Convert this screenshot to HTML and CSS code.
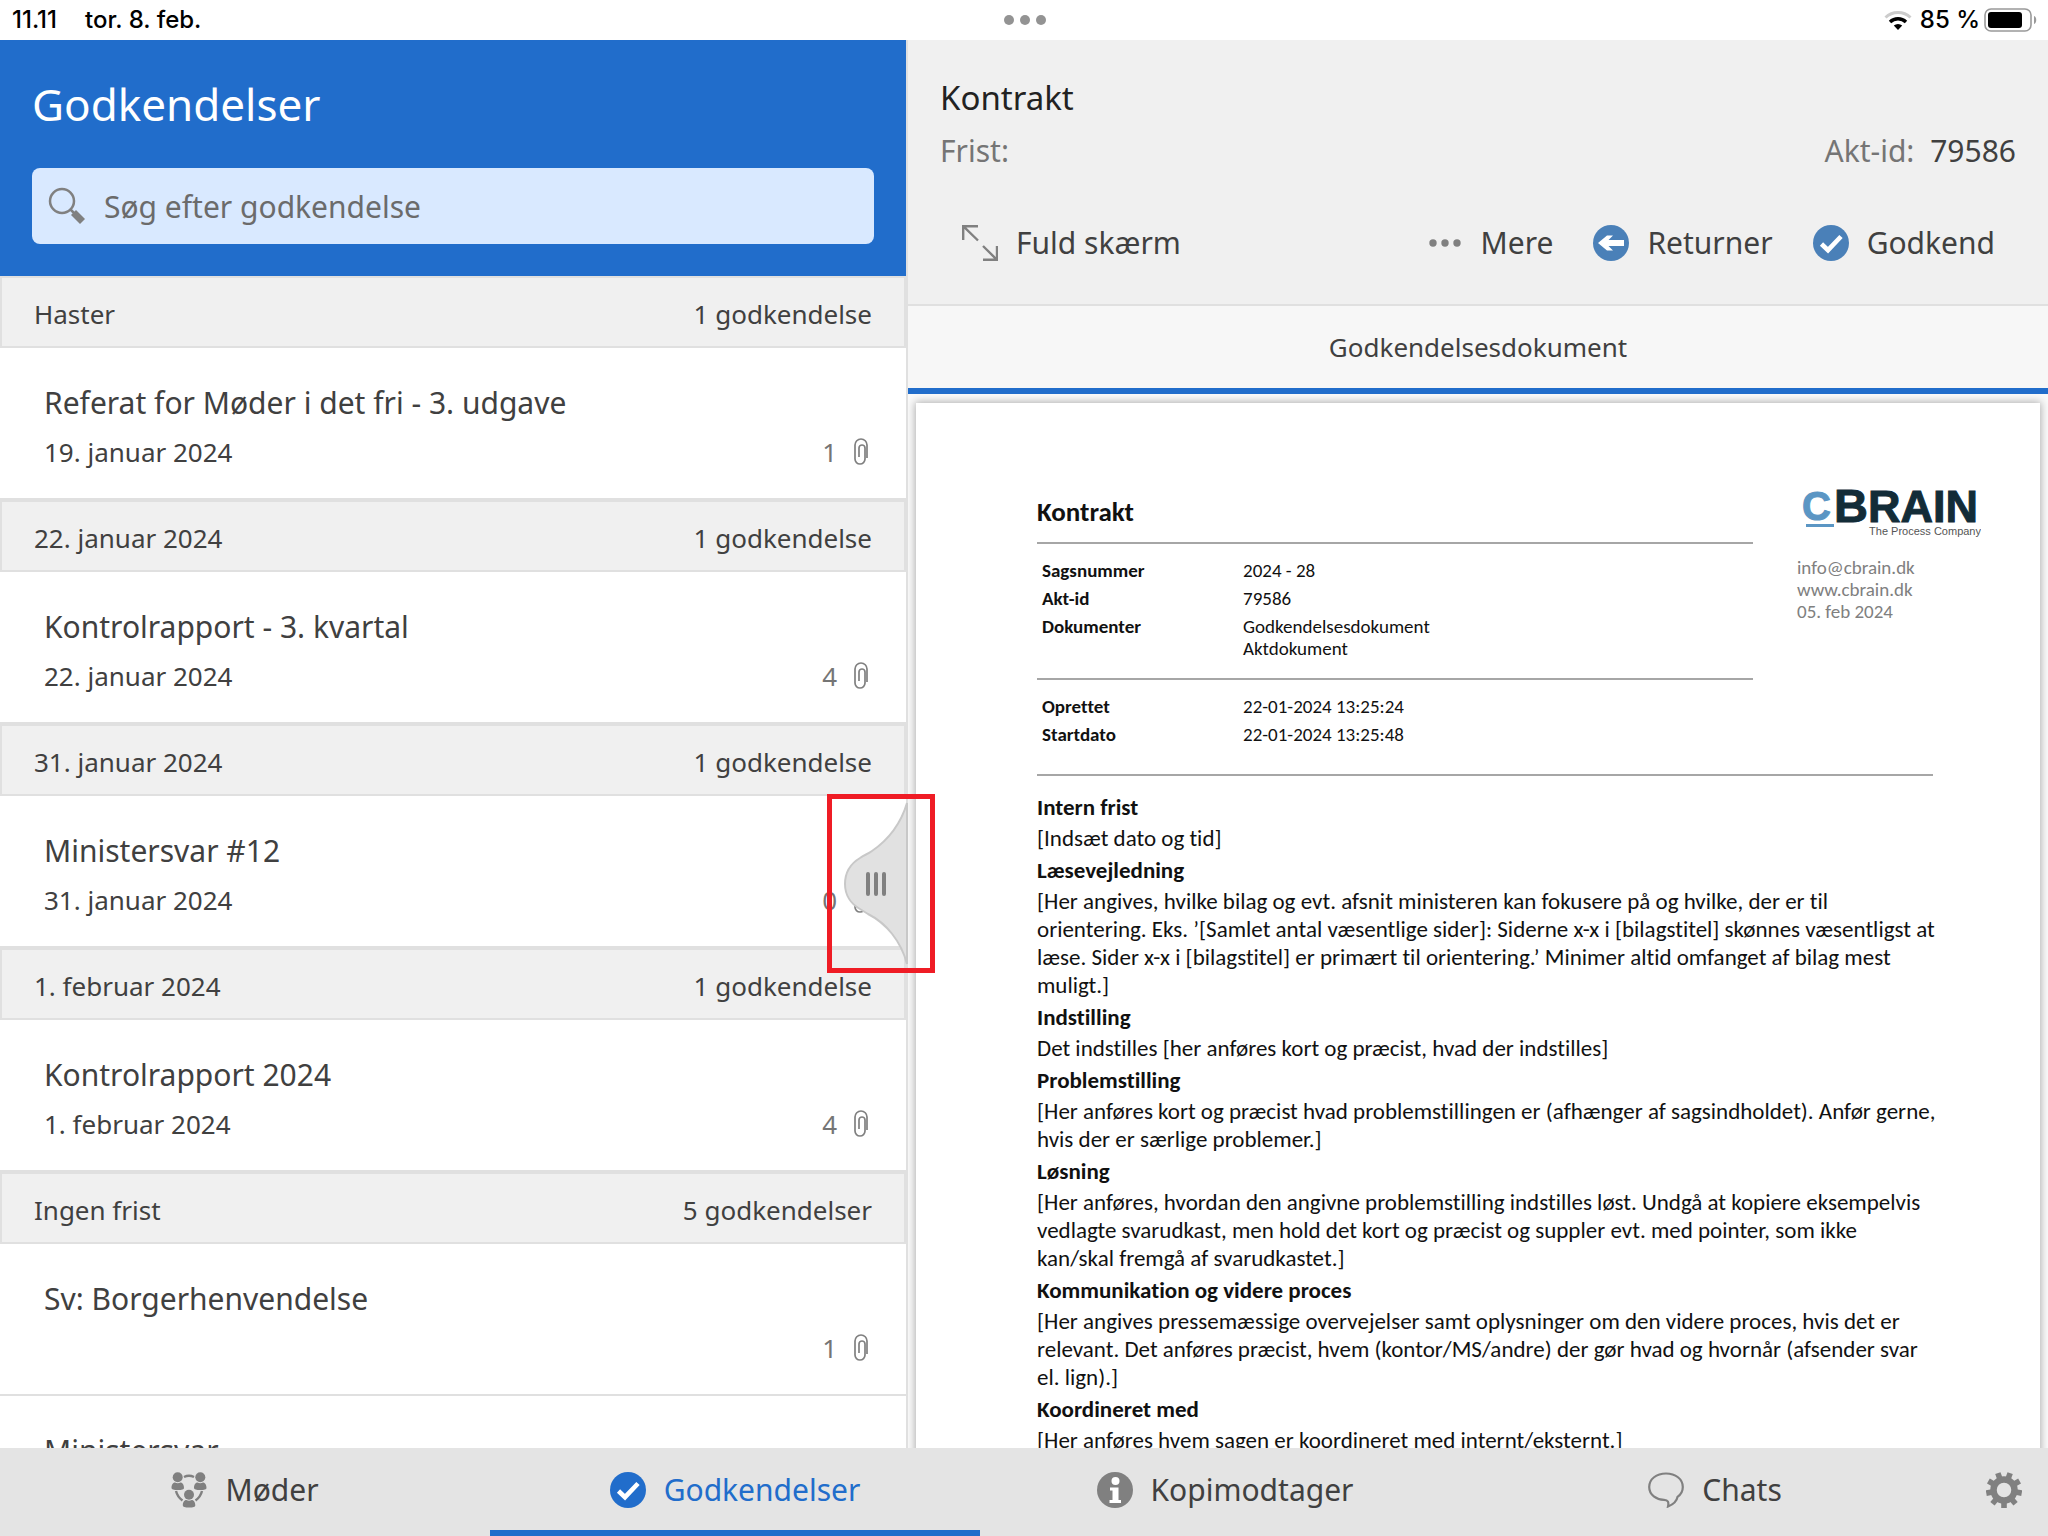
FILE: index.html
```
<!DOCTYPE html>
<html lang="da">
<head>
<meta charset="utf-8">
<meta name="viewport" content="width=device-width, initial-scale=1">
<title>Godkendelser</title>
<link rel="stylesheet" href="styles.css">
</head>
<body class="app">

<svg class="sprite" aria-hidden="true">
  <symbol id="clip" viewBox="0 0 14 28">
    <path d="M13 20V7a6 6 0 0 0-12 0v14a5 5 0 0 0 10 0V10a3 3 0 0 0-6 0v9" fill="none" stroke="#808080" stroke-width="1.7"/>
  </symbol>
  <symbol id="check" viewBox="0 0 36 36">
    <circle cx="18" cy="18" r="18" fill="currentColor"/>
    <path d="M8.500 19l6.500 6.200L28 11.500" fill="none" stroke="#fff" stroke-width="4.600"/>
  </symbol>
</svg>

<header class="status">
  <div class="status-side"><span>11.11</span><span>tor. 8. feb.</span></div>
  <div class="status-dots"><i></i><i></i><i></i></div>
  <div class="status-side status-right">
    <svg class="wifi" viewBox="0 0 28 20" aria-hidden="true">
      <path d="M1.500 7.500a18 18 0 0 1 25 0" fill="none" stroke="#ccc" stroke-width="3"/>
      <path d="M6 12a11.500 11.500 0 0 1 16 0" fill="none" stroke="#000" stroke-width="3.400"/>
      <path d="M14 20l-4.200-4.400a6 6 0 0 1 8.400 0z"/>
    </svg>
    <span class="percent">85 %</span>
    <svg class="battery" viewBox="0 0 54 24" aria-hidden="true">
      <rect x="1" y="1" width="46" height="22" rx="6" fill="none" stroke="#999" stroke-width="1.600"/>
      <rect x="4" y="4" width="34" height="16" rx="3"/>
      <path d="M50 8c3 1 3 7 0 8z" fill="#999"/>
    </svg>
  </div>
</header>

<main class="workspace">
  <section class="inbox">
    <header class="inbox-head">
      <h1 class="inbox-title">Godkendelser</h1>
      <label class="search">
        <svg class="search-icon" viewBox="0 0 38 38" aria-hidden="true">
          <circle cx="14" cy="14" r="12" fill="none" stroke="#808080" stroke-width="2.500"/>
          <path d="M22 22l5 5" stroke="#808080" stroke-width="2.500"/>
          <path d="M25.500 25.500l9 9" stroke="#808080" stroke-width="7"/>
        </svg>
        <input class="search-input" type="search" placeholder="Søg efter godkendelse" aria-label="Søg efter godkendelse">
      </label>
    </header>
    <div class="list">
      <h2 class="group"><span>Haster</span><span>1 godkendelse</span></h2>
      <article class="item">
        <h3 class="item-title">Referat for Møder i det fri - 3. udgave</h3>
        <div class="item-meta"><span>19. januar 2024</span><span class="files">1<svg class="clip"><use href="#clip"/></svg></span></div>
      </article>
      <h2 class="group"><span>22. januar 2024</span><span>1 godkendelse</span></h2>
      <article class="item">
        <h3 class="item-title">Kontrolrapport - 3. kvartal</h3>
        <div class="item-meta"><span>22. januar 2024</span><span class="files">4<svg class="clip"><use href="#clip"/></svg></span></div>
      </article>
      <h2 class="group"><span>31. januar 2024</span><span>1 godkendelse</span></h2>
      <article class="item">
        <h3 class="item-title">Ministersvar #12</h3>
        <div class="item-meta"><span>31. januar 2024</span><span class="files">0<svg class="clip"><use href="#clip"/></svg></span></div>
      </article>
      <h2 class="group"><span>1. februar 2024</span><span>1 godkendelse</span></h2>
      <article class="item">
        <h3 class="item-title">Kontrolrapport 2024</h3>
        <div class="item-meta"><span>1. februar 2024</span><span class="files">4<svg class="clip"><use href="#clip"/></svg></span></div>
      </article>
      <h2 class="group"><span>Ingen frist</span><span>5 godkendelser</span></h2>
      <article class="item">
        <h3 class="item-title">Sv: Borgerhenvendelse</h3>
        <div class="item-meta"><span></span><span class="files">1<svg class="clip"><use href="#clip"/></svg></span></div>
      </article>
      <article class="item">
        <h3 class="item-title">Ministersvar</h3>
      </article>
    </div>
    <button class="handle" type="button" aria-label="Træk for at ændre bredden">
      <svg class="handle-shape" viewBox="0 0 64 164">
        <path d="M63 1C57 21 44 38 28 49 24 52 20 53 16 56 6 62 1 71 1 82 1 93 7 102 16 107L24 112C42 121 57 139 63 162Z" fill="#e1e1e1" stroke="#c8c8c8" stroke-width="2"/>
        <path d="M24 72v20M32 72v20M40 72v20" stroke="#808080" stroke-width="4" stroke-linecap="round"/>
      </svg>
    </button>
    <div class="callout"></div>
  </section>

  <section class="detail">
    <header class="detail-head">
      <h2 class="detail-title">Kontrakt</h2>
      <div class="detail-meta"><span>Frist:</span><span class="akt">Akt-id: <b>79586</b></span></div>
      <div class="actions">
        <button class="action action-full" type="button">
          <svg class="icon" viewBox="0 0 36 36" fill="none" stroke="#808080" stroke-width="2.400" aria-hidden="true">
            <path d="M1.200 15V1.200H16M1.200 1.200L16 15.500M35 21v13.800H21M35 34.800L21 21"/>
          </svg>Fuld skærm
        </button>
        <button class="action" type="button">
          <svg class="icon" viewBox="0 0 36 36" fill="#808080" aria-hidden="true"><circle cx="6" cy="18" r="3.700"/><circle cx="18" cy="18" r="3.700"/><circle cx="30" cy="18" r="3.700"/></svg>Mere
        </button>
        <button class="action" type="button">
          <svg class="icon" viewBox="0 0 36 36" aria-hidden="true"><circle cx="18" cy="18" r="18" fill="#4a80b8"/><path d="M5 18l9-7.500h6L15.500 15H31v6H15.500l4.500 4.500h-6z" fill="#fff"/></svg>Returner
        </button>
        <button class="action" type="button">
          <svg class="icon icon-approve"><use href="#check"/></svg>Godkend
        </button>
      </div>
    </header>
    <button class="doc-tab" type="button">Godkendelsesdokument</button>
    <div class="viewer">
      <article class="page">
        <div class="page-top">
          <div>
            <h1 class="page-title">Kontrakt</h1>
            <hr class="rule">
            <table class="facts">
              <tr><th scope="row">Sagsnummer</th><td>2024 - 28</td></tr>
              <tr><th scope="row">Akt-id</th><td>79586</td></tr>
              <tr><th scope="row">Dokumenter</th><td>Godkendelsesdokument<br>Aktdokument</td></tr>
            </table>
            <hr class="rule">
            <table class="facts">
              <tr><th scope="row">Oprettet</th><td>22-01-2024 13:25:24</td></tr>
              <tr><th scope="row">Startdato</th><td>22-01-2024 13:25:48</td></tr>
            </table>
          </div>
          <aside class="sender">
            <svg class="logo" viewBox="0 0 184 56" role="img" aria-label="cBrain, The Process Company">
              <text x="5" y="36" class="logo-c">C</text>
              <rect x="9" y="40" width="28" height="3" fill="#5b96c4"/>
              <text x="37" y="38" class="logo-b">B<tspan class="logo-rain">RAIN</tspan></text>
              <text x="184" y="51" class="logo-tag">The Process Company</text>
            </svg>
            <p class="contact">info@cbrain.dk<br>www.cbrain.dk<br>05. feb 2024</p>
          </aside>
        </div>
        <div class="page-body">
          <hr class="rule">
          <h2>Intern frist</h2>
          <p>[Indsæt dato og tid]</p>
          <h2>Læsevejledning</h2>
          <p>[Her angives, hvilke bilag og evt. afsnit ministeren kan fokusere på og hvilke, der er til<br>orientering. Eks. ’[Samlet antal væsentlige sider]: Siderne x-x i [bilagstitel] skønnes væsentligst at<br>læse. Sider x-x i [bilagstitel] er primært til orientering.’ Minimer altid omfanget af bilag mest<br>muligt.]</p>
          <h2>Indstilling</h2>
          <p>Det indstilles [her anføres kort og præcist, hvad der indstilles]</p>
          <h2>Problemstilling</h2>
          <p>[Her anføres kort og præcist hvad problemstillingen er (afhænger af sagsindholdet). Anfør gerne,<br>hvis der er særlige problemer.]</p>
          <h2>Løsning</h2>
          <p>[Her anføres, hvordan den angivne problemstilling indstilles løst. Undgå at kopiere eksempelvis<br>vedlagte svarudkast, men hold det kort og præcist og suppler evt. med pointer, som ikke<br>kan/skal fremgå af svarudkastet.]</p>
          <h2>Kommunikation og videre proces</h2>
          <p>[Her angives pressemæssige overvejelser samt oplysninger om den videre proces, hvis det er<br>relevant. Det anføres præcist, hvem (kontor/MS/andre) der gør hvad og hvornår (afsender svar<br>el. lign).]</p>
          <h2>Koordineret med</h2>
          <p>[Her anføres hvem sagen er koordineret med internt/eksternt.]</p>
        </div>
      </article>
    </div>
  </section>
</main>

<nav class="tabs">
  <a class="tab" href="#moeder">
    <svg class="icon" viewBox="0 0 36 36" fill="#808080" aria-hidden="true">
      <circle cx="6.700" cy="5.300" r="5"/><circle cx="29.300" cy="5.300" r="5"/><circle cx="18" cy="22.700" r="5"/>
      <path d="M.5 16c0-4 2-5.500 3.500-5.500 2 1 3.500 1 5.400 0 1.600 0 3.600 1.500 3.600 5.500q0 2-6.200 2T.5 16zM23 16c0-4 2-5.500 3.500-5.500 2 1 3.500 1 5.400 0 1.600 0 3.600 1.500 3.600 5.500q0 2-6.200 2T23 16zM11.800 33.500c0-4 2-5.500 3.500-5.500 2 1 3.500 1 5.400 0 1.600 0 3.600 1.500 3.600 5.500q0 2-6.200 2t-6.300-2z"/>
      <path d="M13 5q5-2.500 10 0M5 19q1.500 6 6.500 9.500M31 19q-1.500 6-6.500 9.500" fill="none" stroke="#808080" stroke-width="2.400"/>
    </svg>Møder
  </a>
  <a class="tab tab-active" href="#godkendelser" aria-current="page">
    <svg class="icon"><use href="#check"/></svg>Godkendelser
  </a>
  <a class="tab" href="#kopimodtager">
    <svg class="icon" viewBox="0 0 36 36" aria-hidden="true"><circle cx="18" cy="18" r="18" fill="#808080"/><circle cx="18.500" cy="9" r="4" fill="#fff"/><path d="M13 15.500h8.500v12.500H24v3H12.500v-3h3V18.500H13z" fill="#fff"/></svg>Kopimodtager
  </a>
  <a class="tab" href="#chats">
    <svg class="icon" viewBox="0 0 36 36" aria-hidden="true"><path d="M18 1.500C8.500 1.500 1.200 7 1.200 15S8.500 27.500 16 27.800c4 .2 5 2.200 4 6.700C26 32 29 28 29.500 24.800 33 22.500 34.800 19 34.800 15 34.800 7 27.500 1.500 18 1.500z" fill="none" stroke="#808080" stroke-width="2.200"/></svg>Chats
  </a>
  <button class="settings" type="button" aria-label="Indstillinger">
    <svg class="icon" viewBox="-18 -18 36 36" aria-hidden="true">
      <circle r="10.500" fill="none" stroke="#808080" stroke-width="6.500"/>
      <g stroke="#808080" stroke-width="5.600">
        <path d="M0 12v6"/><path d="M0 12v6" transform="rotate(40)"/><path d="M0 12v6" transform="rotate(80)"/><path d="M0 12v6" transform="rotate(120)"/><path d="M0 12v6" transform="rotate(160)"/><path d="M0 12v6" transform="rotate(200)"/><path d="M0 12v6" transform="rotate(240)"/><path d="M0 12v6" transform="rotate(280)"/><path d="M0 12v6" transform="rotate(320)"/>
      </g>
    </svg>
  </button>
</nav>

</body>
</html>
```
FILE: styles.css
```
* { box-sizing: border-box; margin: 0; }

.app {
  display: flex;
  flex-direction: column;
  height: 100vh;
  overflow: hidden;
  background: #fff;
  color: #404040;
  font: 26px/40px "Noto Sans", sans-serif;
}

.sprite { display: none; }
button { border: 0; background: none; color: inherit; font: inherit; padding: 0; }
.icon { width: 36px; height: 36px; flex: none; }

/* Status bar */
.status {
  display: grid;
  grid-template-columns: 1fr auto 1fr;
  align-items: center;
  height: 40px;
  flex: none;
  padding: 0 10px 0 12px;
  color: #000;
  font: 500 24px/40px Inter, sans-serif;
}
.status-side { display: flex; align-items: center; gap: 28px; }
.status-right { justify-content: flex-end; gap: 4px; }
.percent { padding-left: 4px; }
.status-dots { display: flex; gap: 6px; }
.status-dots i { width: 10px; height: 10px; border-radius: 50%; background: #939393; }
.wifi { width: 28px; height: 20px; }
.battery { width: 54px; height: 24px; }

/* Two panes */
.workspace {
  display: grid;
  grid-template-columns: 227fr 285fr;
  grid-template-rows: minmax(0, 1fr);
  flex: 1;
  min-height: 0;
}
.inbox {
  position: relative;
  z-index: 1;
  display: flex;
  flex-direction: column;
  min-height: 0;
  border-right: 2px solid #e0e0e0;
}
.inbox-head { padding: 34px 32px 32px; background: #216dcb; flex: none; }
.inbox-title { color: #fff; font-size: 44px; font-weight: 400; line-height: 60px; }
.search {
  display: flex;
  align-items: center;
  gap: 18px;
  height: 76px;
  margin-top: 34px;
  padding: 0 16px;
  border-radius: 8px;
  background: #d9e9ff;
}
.search-icon { width: 38px; height: 38px; flex: none; }
.search-input {
  flex: 1;
  min-width: 0;
  padding: 2px 0 0;
  border: 0;
  outline: 0;
  background: none;
  color: #404040;
  font: 30px/40px "Noto Sans", sans-serif;
  appearance: none;
}
.search-input::placeholder { color: #6b6b6b; opacity: 1; }

.list { flex: 1; min-height: 0; overflow: hidden; }
.group {
  display: flex;
  justify-content: space-between;
  align-items: center;
  height: 72px;
  padding: 3px 32px 0;
  border: 2px solid #e0e0e0;
  background: #f0f0f0;
  font-size: 26px;
  font-weight: 400;
}
.item {
  display: flex;
  flex-direction: column;
  gap: 9px;
  height: 152px;
  padding: 35px 38px 26px 44px;
  border-bottom: 2px solid #e0e0e0;
}
.item-title { font-size: 30px; font-weight: 400; line-height: 40px; }
.item-meta { display: flex; justify-content: space-between; }
.files { display: flex; align-items: center; gap: 17px; color: #757575; }
.clip { width: 14px; height: 28px; }

/* Splitter handle and the frame round it lie over both panes */
.handle { position: absolute; top: 762px; right: -2px; width: 64px; height: 164px; }
.handle-shape { display: block; width: 64px; height: 164px; }
.callout {
  position: absolute;
  top: 754px;
  right: -29px;
  width: 108px;
  height: 179px;
  border: 5px solid #ef1c25;
  pointer-events: none;
}

/* Detail pane */
.detail { display: flex; flex-direction: column; min-height: 0; min-width: 0; }
.detail-head {
  flex: none;
  padding: 38px 32px 31px;
  border-bottom: 2px solid #e0e0e0;
  background: #f0f0f0;
}
.detail-title { color: #222; font-size: 33px; font-weight: 400; line-height: 40px; }
.detail-meta { display: flex; justify-content: space-between; margin-top: 13px; font-size: 30px; color: #757575; }
.akt b { margin-left: 8px; color: #404040; font-weight: 400; }
.actions { display: flex; margin-top: 42px; padding: 0 1px 0 2px; }
.action { display: flex; align-items: center; gap: 18px; height: 60px; padding: 0 20px; font-size: 30px; }
.action-full { margin-right: auto; }
.icon-approve { color: #4a80b8; }
.doc-tab { flex: none; height: 88px; border-bottom: 6px solid #216dcb; background: #f7f7f7; }

.viewer { flex: 1; min-height: 0; padding: 9px 8px 0; overflow: hidden; background: #fafafa; }
.page {
  min-height: 100%;
  padding: 91px 59px 40px 121px;
  background: #fff;
  box-shadow: 0 0 8px 1px rgba(0, 0, 0, .3);
  color: #111;
  font: 23px/28px Carlito, Lato, sans-serif;
  font-variant-ligatures: none;
}
.page-top { display: grid; grid-template-columns: 1fr 184px; gap: 44px; }
.page-title { font-size: 27px; line-height: 36px; margin-bottom: 12px; }
.rule { height: 2px; border: 0; background: #a6a6a6; }
.facts { margin: 13px 0 15px 5px; border-collapse: collapse; font-size: 19px; line-height: 22px; }
.facts th { width: 201px; text-align: left; }
.facts th, .facts td { padding: 3px 0; vertical-align: top; }
.logo { display: block; width: 184px; height: 56px; margin-top: -10px; }
.logo text { font-family: "Liberation Sans", sans-serif; }
.logo .logo-c { font-size: 40px; font-weight: 700; fill: #5b96c4; stroke: #5b96c4; }
.logo .logo-b { font-size: 47px; font-weight: 700; fill: #132c38; stroke: #132c38; }
.logo-rain { font-size: 45px; }
.logo-tag { font-size: 11px; text-anchor: end; fill: #555; }
.contact { margin-top: 17px; color: #808080; font-size: 19px; line-height: 22px; }

.page-body { margin-top: 10px; padding-right: 48px; white-space: nowrap; }
.page-body .rule { margin-bottom: 17px; }
.page-body h2 { margin: 4px 0 3px; font-size: 23px; line-height: 28px; }

/* Bottom navigation */
.tabs { display: grid; grid-template-columns: repeat(4, 1fr) 88px; flex: none; height: 88px; background: #e4e4e4; }
.tab {
  display: flex;
  justify-content: center;
  align-items: center;
  gap: 18px;
  padding-top: 2px;
  border-bottom: 6px solid transparent;
  color: #404040;
  font-size: 30px;
  text-decoration: none;
}
.tab-active { border-color: #216dcb; color: #216dcb; }
.settings { display: flex; justify-content: center; align-items: center; padding-bottom: 4px; }
```
